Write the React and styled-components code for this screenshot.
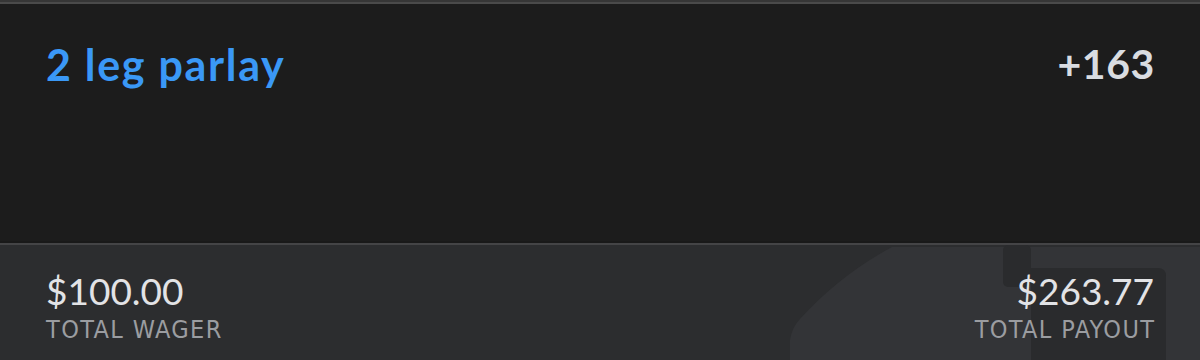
import React from "react";
import styled, { createGlobalStyle } from "styled-components";

const GlobalStyle = createGlobalStyle`
  html, body {
    margin: 0;
    padding: 0;
    background: #1c1c1c;
  }
  body {
    font-family: Lato, "Liberation Sans", sans-serif;
  }
`;

export default function App() {
  return (
    <>
      <GlobalStyle />
      <Card>
        <Header>
          <Title>2 leg parlay</Title>
          <Odds>+163</Odds>
        </Header>
        <Footer>
          <Watermark viewBox="0 0 1200 115" preserveAspectRatio="none">
            <path
              d="M790 115 L790 95 Q792 82 800 74 Q840 30 892 2 L1200 2 L1200 115 L886 115 Q930 60 1000 44 L1003 44 L1003 115 Z"
              fill="#333437"
            />
            <rect x="1003" y="0" width="28" height="42" rx="5" fill="#2a2b2d" />
            <path d="M1031 23 L1158 23 Q1166 23 1166 31 L1166 115 L1031 115 Z" fill="#2a2b2d" />
          </Watermark>
          <Stat>
            <Amount>$100.00</Amount>
            <Label>Total Wager</Label>
          </Stat>
          <Stat $right>
            <Amount>$263.77</Amount>
            <Label>Total Payout</Label>
          </Stat>
        </Footer>
      </Card>
    </>
  );
}

const Card = styled.div`
  width: 1200px;
  height: 360px;
  display: flex;
  flex-direction: column;
  overflow: hidden;
`;

const Header = styled.div`
  height: 243px;
  flex-shrink: 0;
  display: flex;
  justify-content: space-between;
  align-items: flex-start;
  padding: 37px 46px 0 46px;
  box-sizing: border-box;
  background: #1c1c1c;
  border-top: 2px solid #363636;
  box-shadow: inset 0 2px 0 #4a4a4a;
  border-bottom: 2px solid #191919;
`;

const Title = styled.span`
  font-size: 43px;
  font-weight: 700;
  color: #3a98f6;
  letter-spacing: 1.7px;
`;

const Odds = styled.span`
  font-size: 41px;
  font-weight: 700;
  color: #d9dce1;
  letter-spacing: 0.6px;
  margin-right: -1px;
`;

const Footer = styled.div`
  position: relative;
  flex: 1;
  display: flex;
  justify-content: space-between;
  align-items: flex-start;
  padding: 25px 46px 0 46px;
  background: #2c2d2f;
  border-top: 2px solid #444446;
`;

const Watermark = styled.svg`
  position: absolute;
  left: 0;
  top: 0;
  width: 100%;
  height: 100%;
`;

const Stat = styled.div`
  position: relative;
  display: flex;
  flex-direction: column;
  align-items: ${(p) => (p.$right ? "flex-end" : "flex-start")};
`;

const Amount = styled.span`
  font-size: 37px;
  font-weight: 400;
  line-height: 42px;
  color: #e2e3e6;
`;

const Label = styled.span`
  font-family: "DejaVu Sans Condensed", "DejaVu Sans", sans-serif;
  font-stretch: condensed;
  font-size: 25px;
  line-height: 30px;
  margin-top: 3px;
  text-transform: uppercase;
  letter-spacing: 1.4px;
  margin-right: -1.4px;
  color: #9b9da1;
`;
